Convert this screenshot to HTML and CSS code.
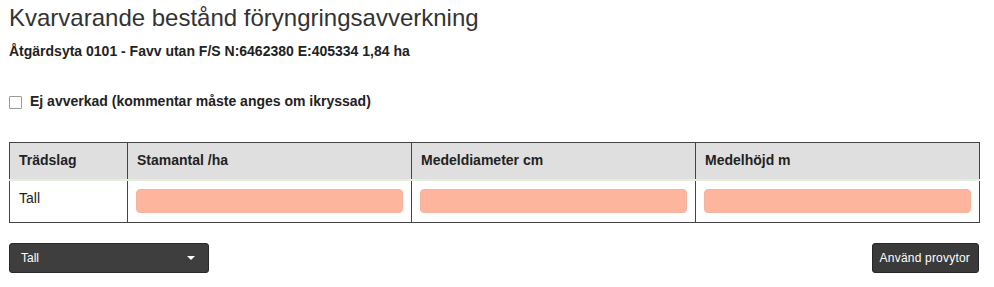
FILE: index.html
```html
<!DOCTYPE html>
<html lang="sv">
<head>
<meta charset="utf-8">
<title>Kvarvarande bestånd</title>
<link rel="stylesheet" href="styles.css">
</head>
<body>
<div class="page">
  <h1 class="title">Kvarvarande bestånd föryngringsavverkning</h1>
  <p class="subtitle">Åtgärdsyta 0101 - Favv utan F/S N:6462380 E:405334 1,84 ha</p>
  <label class="check">
    <span class="box"></span>
    <span class="check-label">Ej avverkad (kommentar måste anges om ikryssad)</span>
  </label>
  <table class="grid">
    <colgroup>
      <col class="c1"><col class="c2"><col class="c3"><col class="c4">
    </colgroup>
    <thead>
      <tr>
        <th>Trädslag</th>
        <th>Stamantal /ha</th>
        <th>Medeldiameter cm</th>
        <th>Medelhöjd m</th>
      </tr>
    </thead>
    <tbody>
      <tr>
        <td>Tall</td>
        <td><div class="field"></div></td>
        <td><div class="field"></div></td>
        <td><div class="field"></div></td>
      </tr>
    </tbody>
  </table>
  <div class="actions">
    <div class="select">
      <span>Tall</span>
      <span class="caret"></span>
    </div>
    <div class="btn">Använd provytor</div>
  </div>
</div>
</body>
</html>
```

FILE: styles.css
```css
html, body {
  margin: 0;
  padding: 0;
  background: #ffffff;
}
body {
  font-family: "Liberation Sans", Arial, sans-serif;
  font-size: 14px;
  color: #333333;
}
.page {
  width: 970px;
  margin-left: 9px;
}
.title {
  font-size: 24px;
  font-weight: normal;
  line-height: 26px;
  margin: 5px 0 0 0;
  color: #333333;
}
.subtitle {
  font-size: 14px;
  font-weight: bold;
  line-height: 20px;
  margin: 10px 0 0 0;
  color: #222222;
}
.check {
  display: flex;
  align-items: center;
  gap: 8px;
  margin-top: 30px;
  height: 20px;
}
.box {
  width: 11px;
  height: 11px;
  border: 1px solid #9a9a9a;
  border-radius: 1px;
  background: #fff;
  display: block;
  margin-top: 2px;
}
.check-label {
  font-weight: bold;
  color: #222222;
  line-height: 20px;
}
.grid {
  margin-top: 31px;
  width: 970px;
  border-collapse: collapse;
  table-layout: fixed;
  border: 1px solid #444444;
}
.c1 { width: 118px; }
.c2 { width: 284px; }
.c3 { width: 284px; }
.c4 { width: 284px; }
.grid th {
  background: #e0dfe0;
  text-align: left;
  font-weight: bold;
  color: #222222;
  padding: 8px 8px 10px 9px;
  line-height: 18px;
  border-left: 1px solid #444444;
  border-bottom: 2px solid #e2efd9;
}
.grid td {
  padding: 8px 8px 9px 8px;
  line-height: 18px;
  vertical-align: top;
  border-left: 1px solid #444444;
  background: #ffffff;
}
.grid td:first-child {
  padding-left: 9px;
  color: #222222;
}
.field {
  height: 22px;
  border: 1px solid #f3b49f;
  border-radius: 4px;
  background: #fdb59e;
}
.actions {
  display: flex;
  justify-content: space-between;
  margin-top: 20px;
}
.select {
  width: 200px;
  height: 30px;
  box-sizing: border-box;
  background: #3e3e3e;
  border: 1px solid #2a2a2a;
  border-radius: 3px;
  color: #ffffff;
  font-size: 12px;
  display: flex;
  align-items: center;
  justify-content: space-between;
  padding: 0 13px 0 11px;
}
.caret {
  width: 0;
  height: 0;
  border-left: 4px solid transparent;
  border-right: 4px solid transparent;
  border-top: 4px solid #ffffff;
}
.btn {
  height: 30px;
  box-sizing: border-box;
  background: #3a3a3a;
  border: 1px solid #262626;
  border-radius: 3px;
  color: #ffffff;
  font-size: 12px;
  letter-spacing: 0.2px;
  display: flex;
  align-items: center;
  padding: 0 8px 0 7px;
}
```
